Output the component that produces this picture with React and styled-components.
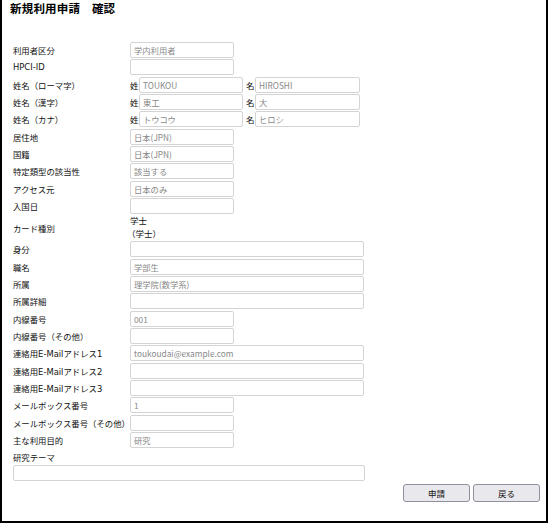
import styled, { createGlobalStyle } from 'styled-components';

const GlobalStyle = createGlobalStyle`
	html, body {
		margin: 0;
		padding: 0;
		background: #fff;
	}
	body {
		font-family: "DejaVu Sans", "Noto Sans CJK JP", sans-serif;
	}
`;

const fields = [
	{ label: '利用者区分', value: '学内利用者' },
	{ label: 'HPCI-ID', value: '' },
	{ label: '姓名（ローマ字）', pair: [ 'TOUKOU', 'HIROSHI' ] },
	{ label: '姓名（漢字）', pair: [ '東工', '大' ] },
	{ label: '姓名（カナ）', pair: [ 'トウコウ', 'ヒロシ' ] },
	{ label: '居住地', value: '日本(JPN)' },
	{ label: '国籍', value: '日本(JPN)' },
	{ label: '特定類型の該当性', value: '該当する' },
	{ label: 'アクセス元', value: '日本のみ' },
	{ label: '入国日', value: '' },
	{ label: 'カード種別', lines: [ '学士', '（学士）' ] },
	{ label: '身分', value: '', wide: true },
	{ label: '職名', value: '学部生', wide: true },
	{ label: '所属', value: '理学院(数学系)', wide: true },
	{ label: '所属詳細', value: '', wide: true },
	{ label: '内線番号', value: '001' },
	{ label: '内線番号（その他）', value: '' },
	{ label: '連絡用E-Mailアドレス1', value: 'toukoudai@example.com', wide: true },
	{ label: '連絡用E-Mailアドレス2', value: '', wide: true },
	{ label: '連絡用E-Mailアドレス3', value: '', wide: true },
	{ label: 'メールボックス番号', value: '1' },
	{ label: 'メールボックス番号（その他）', value: '' },
	{ label: '主な利用目的', value: '研究' }
];

const App = () => {
	return (
		<>
			<GlobalStyle />
			<Frame>
				<Title>新規利用申請　確認</Title>
				<Form>
					{fields.map((f, index) => (
						<Row key={index} $tall={!!f.lines}>
							<Label>{f.label}</Label>
							{f.pair && (
								<Pair>
									<Prefix>姓</Prefix>
									<Field $w={104}>{f.pair[0]}</Field>
									<Prefix>名</Prefix>
									<Field $w={105}>{f.pair[1]}</Field>
								</Pair>
							)}
							{f.lines && (
								<Lines>
									<span>{f.lines[0]}</span>
									<span>{f.lines[1]}</span>
								</Lines>
							)}
							{!f.pair && !f.lines && (
								<Field $w={f.wide ? 234 : 104}>{f.value}</Field>
							)}
						</Row>
					))}
					<Row>
						<Label>研究テーマ</Label>
					</Row>
					<ThemeField />
				</Form>
				<Actions>
					<Button>申請</Button>
					<Button>戻る</Button>
				</Actions>
			</Frame>
		</>
	);
};

const Frame = styled.div`
	box-sizing: border-box;
	width: 548px;
	height: 523px;
	border: 2px solid #000;
	border-top: none;
	padding: 2px 0 0 0;
	display: flex;
	flex-direction: column;
`;

const Title = styled.h1`
	margin: 0 0 0 8px;
	font-size: 11.5px;
	font-weight: bold;
	line-height: 14px;
	color: #000;
	letter-spacing: 0.2px;
`;

const Form = styled.div`
	display: flex;
	flex-direction: column;
	gap: 1.35px;
	margin: 26px 0 0 11px;
`;

const Row = styled.div`
	display: grid;
	grid-template-columns: 117px 1fr;
	align-items: center;
	height: ${(p) => (p.$tall ? '24.5px' : '16px')};
`;

const Label = styled.div`
	font-size: 8.4px;
	color: #111;
	white-space: nowrap;
`;

const Field = styled.div`
	box-sizing: border-box;
	width: ${(p) => p.$w}px;
	height: 16px;
	border: 1px solid #d4d4d4;
	border-radius: 2px;
	padding: 0 3px;
	font-family: "Noto Sans CJK JP", sans-serif;
	font-size: 8.3px;
	line-height: 14px;
	color: #888;
	white-space: nowrap;
	overflow: hidden;
`;

const Pair = styled.div`
	display: flex;
	align-items: center;
`;

const Prefix = styled.span`
	font-size: 8.5px;
	color: #111;
	width: 8px;
	margin-right: 1px;
	&:nth-of-type(2) {
		margin-left: 3px;
	}
`;

const Lines = styled.div`
	display: flex;
	flex-direction: column;
	font-size: 8.5px;
	line-height: 12.5px;
	color: #111;
	span:last-child {
		margin-left: -3px;
	}
`;

const ThemeField = styled.div`
	box-sizing: border-box;
	width: 352px;
	height: 16px;
	margin-top: -1.5px;
	border: 1px solid #d4d4d4;
	border-radius: 2px;
`;

const Actions = styled.div`
	display: flex;
	justify-content: flex-end;
	gap: 3px;
	margin: 3px 6px 0 0;
`;

const Button = styled.button`
	box-sizing: border-box;
	width: 67px;
	height: 18px;
	padding: 0;
	font-family: "DejaVu Sans", "Noto Sans CJK JP", sans-serif;
	font-size: 8.5px;
	color: #111;
	background: #e9e9ed;
	border: 1px solid #8f8f9d;
	border-radius: 3px;
`;

export default App;
